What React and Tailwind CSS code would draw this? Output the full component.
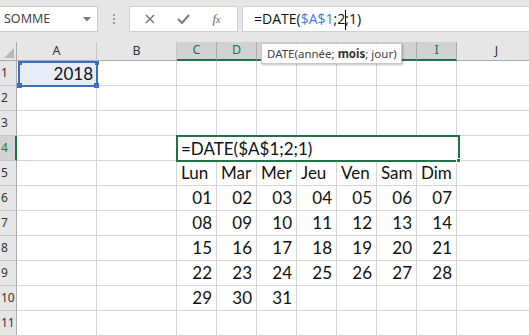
import React from "react";

const cols = [
  { k: "A", w: "w-[80px]" },
  { k: "B", w: "w-[80px]" },
  { k: "C", w: "w-[40px]", sel: true },
  { k: "D", w: "w-[40px]", sel: true },
  { k: "E", w: "w-[40px]", sel: true },
  { k: "F", w: "w-[40px]", sel: true },
  { k: "G", w: "w-[40px]", sel: true },
  { k: "H", w: "w-[40px]", sel: true },
  { k: "I", w: "w-[40px]", sel: true },
  { k: "J", w: "w-[80px]" },
];

const rows = {
  5: { C: "Lun", D: "Mar", E: "Mer", F: "Jeu", G: "Ven", H: "Sam", I: "Dim" },
  6: { C: "01", D: "02", E: "03", F: "04", G: "05", H: "06", I: "07" },
  7: { C: "08", D: "09", E: "10", F: "11", G: "12", H: "13", I: "14" },
  8: { C: "15", D: "16", E: "17", F: "18", G: "19", H: "20", I: "21" },
  9: { C: "22", D: "23", E: "24", F: "25", G: "26", H: "27", I: "28" },
  10: { C: "29", D: "30", E: "31" },
};

const cellFont = { fontFamily: "Lato, 'Noto Sans', sans-serif" };

function TopBar() {
  return (
    <div className="h-[42px] bg-[#e6e6e6] flex items-start pt-[6px]" style={{ fontFamily: "'Noto Sans', 'Open Sans', sans-serif" }}>
      <div className="w-[98px] h-[26px] bg-white border border-l-0 border-[#c8c8c8] flex items-center justify-between pl-[4px] pr-[6px] shrink-0">
        <span className="text-[12.5px] text-[#444]">SOMME</span>
        <svg width="8" height="5" viewBox="0 0 8 5"><path d="M0 0 L8 0 L4 4.5 Z" fill="#7a7a7a" /></svg>
      </div>
      <div className="w-[31px] h-[26px] flex flex-col items-center justify-center gap-[2px] shrink-0">
        <div className="w-[2px] h-[2px] bg-[#9a9a9a]" />
        <div className="w-[2px] h-[2px] bg-[#9a9a9a]" />
        <div className="w-[2px] h-[2px] bg-[#9a9a9a]" />
      </div>
      <div className="w-[109px] h-[26px] bg-white border border-[#d0d0d0] flex items-center shrink-0">
        <div className="w-[40px] flex justify-center">
          <svg width="10" height="10" viewBox="0 0 10 10"><path d="M1 1 L9 9 M9 1 L1 9" stroke="#6f6f6f" strokeWidth="1.3" /></svg>
        </div>
        <div className="w-[26px] flex justify-center">
          <svg width="13" height="10" viewBox="0 0 13 10"><path d="M1 5 L5 9 L12 1" stroke="#7a7a7a" strokeWidth="2" fill="none" /></svg>
        </div>
        <div className="flex-1 flex justify-center">
          <span className="text-[13px] text-[#666] italic" style={{ fontFamily: "'Liberation Serif', serif" }}>f<span className="text-[10px]">x</span></span>
        </div>
      </div>
      <div className="ml-[4px] flex-1 h-[26px] bg-white border border-r-0 border-[#d0d0d0] flex items-center pl-[11px] relative">
        <span className="text-[14px] text-[#111] whitespace-nowrap" style={{ fontFamily: "'Open Sans', 'Noto Sans', sans-serif" }}>
          =DATE(<span className="text-[#3f7fd9]">$A$1</span>;2<span className="inline-block w-[1px] h-[20px] bg-black align-middle -mx-[0.5px]" />;1)
        </span>
      </div>
    </div>
  );
}

function HeaderRow() {
  return (
    <div className="flex h-[19px]">
      <div className="w-[17px] shrink-0 bg-[#e6e6e6] border-r border-b border-[#ababab] relative">
        <svg className="absolute right-[2px] bottom-[2px]" width="10" height="10" viewBox="0 0 10 10"><path d="M10 0 L10 10 L0 10 Z" fill="#b8b8b8" /></svg>
      </div>
      {cols.map((c) => (
        <div
          key={c.k}
          className={
            c.sel
              ? `${c.w} shrink-0 bg-[#d2d2d2] border-r border-[#ababab] border-b-2 border-b-[#217346] flex items-center justify-center text-[12.5px] text-[#217346]`
              : `${c.w} shrink-0 bg-[#e6e6e6] border-r border-[#c6c6c6] border-b border-b-[#ababab] flex items-center justify-center text-[12.5px] text-[#333]`
          }
          style={{ fontFamily: "'Noto Sans', 'Open Sans', sans-serif" }}
        >
          {c.k}
        </div>
      ))}
    </div>
  );
}

function Row({ n }) {
  const data = rows[n] || {};
  const hl = n === 4;
  return (
    <div className="flex h-[25px]">
      <div
        className={
          hl
            ? "w-[17px] shrink-0 bg-[#d2d2d2] border-r-2 border-r-[#217346] border-b border-b-[#c6c6c6] flex items-end pb-[3px] pl-[1px] text-[12px] text-[#217346]"
            : "w-[17px] shrink-0 bg-[#e6e6e6] border-r border-r-[#ababab] border-b border-b-[#c6c6c6] flex items-end pb-[3px] pl-[1px] text-[12px] text-[#333]"
        }
        style={{ fontFamily: "'Noto Sans', 'Open Sans', sans-serif" }}
      >
        {n}
      </div>
      {cols.map((c) => {
        const v = data[c.k];
        const isText = n === 5;
        return (
          <div
            key={c.k}
            className={`${c.w} shrink-0 border-r border-b border-[#d4d4d4] flex items-end pb-[2px] text-[17px] leading-[20px] text-[#111] ${isText ? "justify-start pl-[4px]" : "justify-end pr-[4px]"}`}
            style={cellFont}
          >
            {v}
          </div>
        );
      })}
    </div>
  );
}

export default function App() {
  const nums = [1, 2, 3, 4, 5, 6, 7, 8, 9, 10, 11];
  return (
    <div className="w-[529px] h-[335px] overflow-hidden bg-white relative">
      <TopBar />
      <div className="relative">
        <HeaderRow />
        {nums.map((n) => (
          <Row key={n} n={n} />
        ))}

        {/* A1 reference highlight */}
        <div className="absolute left-[18px] top-[19px] w-[80px] h-[26px] border-2 border-[#3b6fc6] bg-[#e6edf8] flex items-end justify-end pr-[3px] pb-[1px]">
          <span className="text-[17px] leading-[20px] text-[#111]" style={cellFont}>2018</span>
          <div className="absolute -left-[2px] -top-[2px] w-[4px] h-[4px] bg-[#3b6fc6]" />
          <div className="absolute -right-[3px] -top-[2px] w-[4px] h-[4px] bg-[#3b6fc6]" />
          <div className="absolute -left-[3px] -bottom-[3px] w-[5px] h-[5px] bg-[#3b6fc6]" />
          <div className="absolute -right-[3px] -bottom-[3px] w-[5px] h-[5px] bg-[#3b6fc6]" />
        </div>

        {/* Edit box C4 */}
        <div className="absolute left-[176px] top-[93px] w-[284px] h-[27px] border-2 border-[#217346] bg-white flex items-end pl-[3px] pb-[1px]">
          <span className="text-[17px] leading-[20px] text-[#111] whitespace-nowrap" style={cellFont}>=DATE($A$1;2;1)</span>
          <div className="absolute -right-[3px] -bottom-[3px] w-[5px] h-[5px] bg-[#217346] border border-white" />
        </div>

        {/* Tooltip */}
        <div
          className="absolute left-[261px] top-[1px] w-[141px] h-[21px] px-[5px] bg-white border border-[#c8c8c8] shadow-[1px_1px_2px_rgba(0,0,0,0.25)] flex items-center text-[11.5px] text-[#444] whitespace-nowrap z-10"
          style={{ fontFamily: "'Noto Sans', 'Open Sans', sans-serif" }}
        >
          DATE(année;&nbsp;<b className="font-bold text-[#333]">mois</b>;&nbsp;jour)
        </div>
      </div>
    </div>
  );
}
